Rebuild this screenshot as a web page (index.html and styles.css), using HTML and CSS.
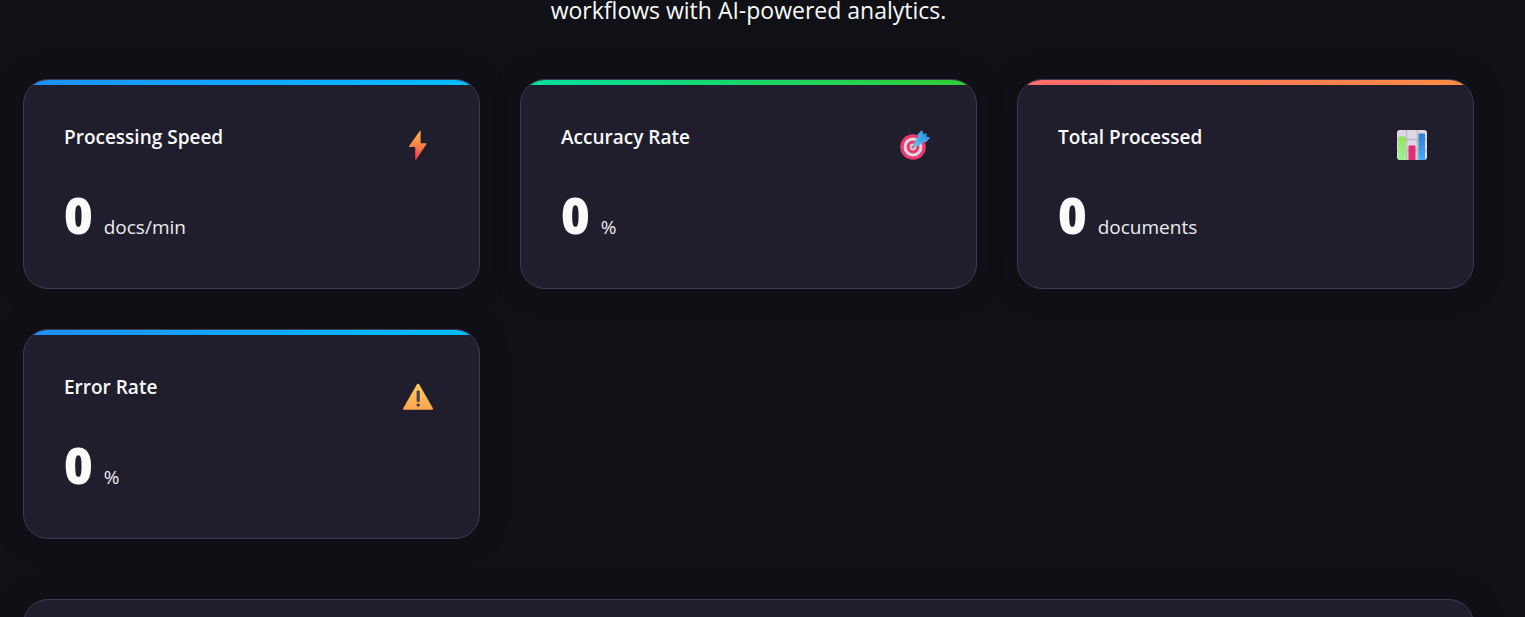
FILE: index.html
```html
<!DOCTYPE html>
<html lang="en">
<head>
<meta charset="utf-8">
<meta name="viewport" content="width=device-width, initial-scale=1">
<title>Analytics</title>
<link rel="stylesheet" href="styles.css">
</head>
<body>
<main class="page">
  <p class="intro">workflows with AI-powered analytics.</p>
  <section class="metrics">
    <article class="card card-blue">
      <header class="card-head">
        <h2 class="card-title">Processing Speed</h2>
        <svg class="icon" viewBox="0 0 30 30" aria-hidden="true">
          <defs><linearGradient id="bolt" x1="0" y1="0" x2="0" y2="1"><stop offset="0" stop-color="#ffb844"/><stop offset=".5" stop-color="#fb8148"/><stop offset="1" stop-color="#f0394e"/></linearGradient></defs>
          <path fill="url(#bolt)" d="M16.600 1.200c.3-.6 1-.4 1 .3v11.700h5.100c.7 0 1 .5.700 1L13.200 29.400c-.3.600-1 .4-1-.3V17H6.800c-.7 0-1-.5-.7-1z"/>
        </svg>
      </header>
      <p class="reading"><span class="value">0</span> <span class="unit">docs/min</span></p>
    </article>
    <article class="card card-green">
      <header class="card-head">
        <h2 class="card-title">Accuracy Rate</h2>
        <svg class="icon" viewBox="0 0 30 30" aria-hidden="true">
          <defs><linearGradient id="dart" x1="0" y1="1" x2="1" y2="0"><stop offset="0" stop-color="#5cc8fa"/><stop offset="1" stop-color="#2387d8"/></linearGradient></defs>
          <circle cx="13" cy="17" r="12.8" fill="#e93c6c"/>
          <circle cx="13" cy="17" r="9.4" fill="#e2d6e4"/>
          <circle cx="13" cy="17" r="6.4" fill="#e63a69"/>
          <circle cx="13" cy="17" r="3.4" fill="#d9c4d0"/>
          <path d="M12.500 17.500l4-4" stroke="#8b8694" stroke-width="2" stroke-linecap="round"/>
          <path fill="url(#dart)" d="M14.800 16c-1-3.500.2-6.500 3.200-8.500L17.500 4.500 21 .8c.6-.6 1.400-.4 1.600.4L23.300 4l2.500-.4c.8-.1 1.200.5.900 1.200l-.7 1.700 3 .6c.8.200 1 .9.500 1.500L26 12.200l-3-.4c-2 3.200-5 4.700-8.200 4.200z"/>
          <path d="M19 11.500L25 4.800" stroke="#2d8edb" stroke-width="1"/>
        </svg>
      </header>
      <p class="reading"><span class="value">0</span> <span class="unit">%</span></p>
    </article>
    <article class="card card-orange">
      <header class="card-head">
        <h2 class="card-title">Total Processed</h2>
        <svg class="icon" viewBox="0 0 30 30" aria-hidden="true">
          <defs>
            <linearGradient id="barGreen" x1="0" y1="0" x2="0" y2="1"><stop offset="0" stop-color="#90e650"/><stop offset="1" stop-color="#9df59a"/></linearGradient>
            <linearGradient id="barBlue" x1="0" y1="0" x2="0" y2="1"><stop offset="0" stop-color="#2b80cf"/><stop offset="1" stop-color="#45b1fb"/></linearGradient>
            <clipPath id="sheet"><rect width="30" height="30" rx="3"/></clipPath>
          </defs>
          <g clip-path="url(#sheet)">
            <rect width="30" height="30" fill="#dfd7e4"/>
            <path d="M9.500 0v30M20.500 0v30M0 9.500h30M0 20.500h30" stroke="#beb7c4" stroke-width="1.400"/>
            <rect x="1.500" y="6.500" width="7" height="25" rx="1" fill="url(#barGreen)"/>
            <rect x="11.500" y="15.500" width="7" height="16" rx="1" fill="#e02f70"/>
            <rect x="21.500" y="3.500" width="6.500" height="28" rx="1" fill="url(#barBlue)"/>
          </g>
        </svg>
      </header>
      <p class="reading"><span class="value">0</span> <span class="unit">documents</span></p>
    </article>
    <article class="card card-blue">
      <header class="card-head">
        <h2 class="card-title">Error Rate</h2>
        <svg class="icon" viewBox="0 0 30 30" aria-hidden="true">
          <defs><linearGradient id="warn" x1="0" y1="0" x2="0" y2="1"><stop offset="0" stop-color="#ffcb5e"/><stop offset="1" stop-color="#ffa64f"/></linearGradient></defs>
          <path fill="url(#warn)" d="M14 4.300c.5-.9 1.600-.9 2.100 0L29.800 28c.5.900 0 1.700-1 1.700H1.300c-1 0-1.500-.8-1-1.700z"/>
          <rect x="13.600" y="10.400" width="3.200" height="11.500" rx="1" fill="#4b4350"/>
          <rect x="13.600" y="23.600" width="3.200" height="3" rx="1" fill="#4b4350"/>
        </svg>
      </header>
      <p class="reading"><span class="value">0</span> <span class="unit">%</span></p>
    </article>
  </section>
  <section class="card panel"></section>
</main>
</body>
</html>
```
FILE: styles.css
```css
* { box-sizing: border-box; }

body {
  margin: 0;
  background: #101116;
  color: #fafafa;
  font-family: "Segoe UI", "Open Sans", "Noto Sans", sans-serif;
}

.page { padding: 0 51px 0 23px; }

.intro {
  margin: 0 0 59px;
  font-size: 23px;
  line-height: 20px;
  text-align: center;
}

.metrics {
  display: grid;
  grid-template-columns: repeat(3, 1fr);
  gap: 40px;
}

.card {
  position: relative;
  overflow: hidden;
  padding: 40px;
  border: 1px solid #3d3a54;
  border-radius: 25px;
  background: #201e2d;
  box-shadow: 0 0 24px rgba(14, 16, 20, 0.5);
}

.card-blue { --bar: linear-gradient(90deg, #1e90ff, #00bfff); }
.card-green { --bar: linear-gradient(90deg, #00e0a0, #32cd32); }
.card-orange { --bar: linear-gradient(90deg, #ff6b6b, #ff8c42); }

.card::before {
  content: "";
  position: absolute;
  inset: 0 0 auto;
  height: 5px;
  background: var(--bar, none);
}

.card-head {
  display: flex;
  justify-content: space-between;
  align-items: flex-start;
  margin-bottom: 22px;
}

.card-title {
  margin: 0;
  font-size: 19px;
  font-weight: 600;
  line-height: 34px;
}

.icon {
  width: 30px;
  height: 30px;
  margin: 10px 6px 8px;
}

.reading {
  display: flex;
  align-items: baseline;
  gap: 11px;
  margin: 0 0 8px;
}

.value {
  font-family: "Segoe UI", "Noto Sans", sans-serif;
  font-size: 49px;
  font-weight: 900;
  line-height: 50px;
}

.unit {
  font-size: 19px;
  line-height: 24px;
  color: #ececee;
}

.panel {
  margin-top: 60px;
  min-height: 100px;
}
```
